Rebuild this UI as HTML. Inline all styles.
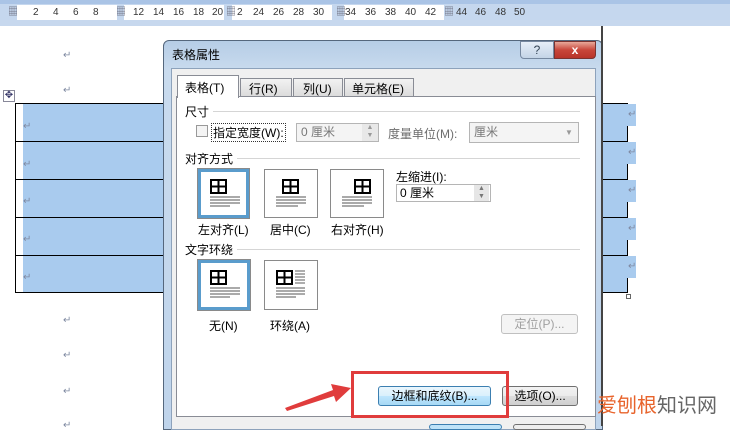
<!DOCTYPE html>
<html><head><meta charset="utf-8"><style>
*{margin:0;padding:0;box-sizing:border-box}
body{width:730px;height:426px;overflow:hidden;background:#fff;position:relative;font-family:"Liberation Sans","Noto Sans CJK SC",sans-serif;font-size:12px;color:#000}
.a{position:absolute}
.ret{position:absolute;color:#7f8aa2;font-size:10px}
.t{position:absolute;white-space:nowrap;font-size:12px}
.box{position:absolute;border:1px solid #8a8a8a;background:#fff}
.sel{border:3px solid #5a9ccc;outline:1px solid #8a8a8a}
.btn{position:absolute;border:1px solid #707070;border-radius:3px;background:linear-gradient(#f2f2f2,#ebebeb 50%,#dddddd 51%,#cfcfcf);text-align:center;font-size:12px;line-height:18px}
</style></head><body>
<!-- ruler -->
<div class="a" style="left:0;top:0;width:730px;height:26px;background:#c5d7ee"></div>
<div class="a" style="left:0;top:0;width:730px;height:4px;background:#aac4e6"></div>
<div class="a" style="left:17px;top:5px;width:100px;height:15px;background:#fff"></div>
<div class="a" style="left:124px;top:5px;width:100px;height:15px;background:#fff"></div>
<div class="a" style="left:232px;top:5px;width:100px;height:15px;background:#fff"></div>
<div class="a" style="left:344px;top:5px;width:100px;height:15px;background:#fff"></div>
<div class="a" style="left:0;top:5px;width:730px;height:15px;font-size:10px;color:#333;line-height:15px">
<span class="a" style="left:8px;color:#667">▦</span>
<span class="a" style="left:33px">2</span><span class="a" style="left:53px">4</span><span class="a" style="left:73px">6</span><span class="a" style="left:93px">8</span>
<span class="a" style="left:116px;color:#667">▦</span>
<span class="a" style="left:133px">12</span><span class="a" style="left:153px">14</span><span class="a" style="left:173px">16</span><span class="a" style="left:193px">18</span><span class="a" style="left:212px">20</span>
<span class="a" style="left:226px;color:#667">▦</span><span class="a" style="left:237px">2</span>
<span class="a" style="left:253px">24</span><span class="a" style="left:273px">26</span><span class="a" style="left:293px">28</span><span class="a" style="left:313px">30</span>
<span class="a" style="left:336px;color:#667">▦</span>
<span class="a" style="left:345px">34</span><span class="a" style="left:365px">36</span><span class="a" style="left:385px">38</span><span class="a" style="left:405px">40</span><span class="a" style="left:425px">42</span>
<span class="a" style="left:444px;color:#667">▦</span><span class="a" style="left:456px">44</span>
<span class="a" style="left:475px">46</span><span class="a" style="left:495px">48</span><span class="a" style="left:514px">50</span>
</div>
<div class="a" style="left:0;top:20px;width:730px;height:6px;background:#c7d8ee"></div>
<!-- returns -->
<span class="ret" style="left:63px;top:50px">↵</span>
<span class="ret" style="left:63px;top:85px">↵</span>
<span class="ret" style="left:63px;top:315px">↵</span>
<span class="ret" style="left:63px;top:350px">↵</span>
<span class="ret" style="left:63px;top:386px">↵</span>
<span class="ret" style="left:63px;top:420px">↵</span>
<div class="a" style="left:3px;top:90px;width:12px;height:12px;border:1px solid #889;font-size:10px;line-height:10px;text-align:center;color:#336">✥</div>
<!-- table -->
<div class="a" style="left:23px;top:103px;width:605px;height:190px;background:#a9cbee"></div>
<div class="a" style="left:15px;top:103px;width:613px;height:190px;border:1px solid #000"></div>
<div class="a" style="left:15px;top:141px;width:613px;height:1px;background:#000"></div>
<div class="a" style="left:15px;top:179px;width:613px;height:1px;background:#000"></div>
<div class="a" style="left:15px;top:217px;width:613px;height:1px;background:#000"></div>
<div class="a" style="left:15px;top:255px;width:613px;height:1px;background:#000"></div>
<span class="ret" style="left:23px;top:121px">↵</span><span class="ret" style="left:23px;top:159px">↵</span><span class="ret" style="left:23px;top:196px">↵</span><span class="ret" style="left:23px;top:234px">↵</span><span class="ret" style="left:23px;top:272px">↵</span>
<div class="a" style="left:627px;top:104px;width:9px;height:22px;background:#a9cbee"></div>
<div class="a" style="left:627px;top:142px;width:9px;height:22px;background:#a9cbee"></div>
<div class="a" style="left:627px;top:180px;width:9px;height:22px;background:#a9cbee"></div>
<div class="a" style="left:627px;top:218px;width:9px;height:22px;background:#a9cbee"></div>
<div class="a" style="left:627px;top:256px;width:9px;height:22px;background:#a9cbee"></div>
<span class="ret" style="left:628px;top:109px">↵</span><span class="ret" style="left:628px;top:147px">↵</span><span class="ret" style="left:628px;top:185px">↵</span><span class="ret" style="left:628px;top:223px">↵</span><span class="ret" style="left:628px;top:261px">↵</span>
<div class="a" style="left:626px;top:294px;width:5px;height:5px;border:1px solid #666"></div>
<!-- dialog -->
<div class="a" style="left:163px;top:40px;width:440px;height:390px;background:linear-gradient(#b6cde6,#c9dbee 30px,#bfd4eb);border:1px solid #55677d;border-radius:6px 6px 0 0"></div>
<div class="t" style="left:172px;top:46px;font-size:12px">表格属性</div>
<div class="a" style="left:520px;top:41px;width:34px;height:18px;border:1px solid #7688a0;border-radius:0 0 0 4px;background:linear-gradient(#e6eef8,#c4d4e6);text-align:center;font-size:12px;color:#345;line-height:16px">?</div>
<div class="a" style="left:554px;top:41px;width:42px;height:18px;border:1px solid #7a3330;border-radius:0 0 4px 0;background:linear-gradient(#e8a89a,#c8463a 50%,#b8342a);text-align:center;color:#fff;font-weight:bold;font-size:12px;line-height:16px">x</div>
<div class="a" style="left:171px;top:68px;width:425px;height:362px;background:#f0f0f0;border:1px solid #8da2bb"></div>
<!-- tabs -->
<div class="a" style="left:176px;top:96px;width:420px;height:321px;background:#fff;border:1px solid #898c95"></div>
<div class="a" style="left:240px;top:78px;width:52px;height:19px;border:1px solid #898c95;background:linear-gradient(#f2f2f2,#dcdcdc)"></div>
<div class="t" style="left:249px;top:80px">行(R)</div>
<div class="a" style="left:293px;top:78px;width:50px;height:19px;border:1px solid #898c95;background:linear-gradient(#f2f2f2,#dcdcdc)"></div>
<div class="t" style="left:303px;top:80px">列(U)</div>
<div class="a" style="left:344px;top:78px;width:70px;height:19px;border:1px solid #898c95;background:linear-gradient(#f2f2f2,#dcdcdc)"></div>
<div class="t" style="left:352px;top:80px">单元格(E)</div>
<div class="a" style="left:177px;top:75px;width:62px;height:23px;border:1px solid #898c95;border-bottom:none;background:#fff"></div>
<div class="t" style="left:185px;top:79px">表格(T)</div>
<!-- size -->
<div class="t" style="left:185px;top:103px">尺寸</div>
<div class="a" style="left:213px;top:111px;width:367px;height:1px;background:#d5d5d5"></div>
<div class="a" style="left:196px;top:125px;width:12px;height:12px;border:1px solid #999;background:#f4f4f4"></div>
<div class="t" style="left:211px;top:123px;border:1px dotted #333;padding:0 1px">指定宽度(W):</div>
<div class="a" style="left:296px;top:123px;width:83px;height:19px;border:1px solid #b5b5b5;background:#f4f4f4;color:#777;padding-left:4px;line-height:17px">0 厘米</div>
<div class="a" style="left:362px;top:124px;width:16px;height:17px;background:#e8e8e8;font-size:7px;color:#999;text-align:center;line-height:8px">▲<br>▼</div>
<div class="t" style="left:388px;top:125px;color:#6d6d6d">度量单位(M):</div>
<div class="a" style="left:469px;top:122px;width:110px;height:21px;border:1px solid #b5b5b5;background:#f4f4f4;color:#777;padding-left:4px;line-height:19px">厘米</div>
<div class="a" style="left:561px;top:124px;width:16px;height:17px;font-size:8px;color:#999;text-align:center;line-height:17px">▼</div>
<!-- align -->
<div class="t" style="left:185px;top:150px">对齐方式</div>
<div class="a" style="left:237px;top:158px;width:343px;height:1px;background:#d5d5d5"></div>
<div class="box sel" style="left:198px;top:169px;width:51px;height:49px"></div>
<div class="box" style="left:264px;top:169px;width:54px;height:49px"></div>
<div class="box" style="left:330px;top:169px;width:54px;height:49px"></div>
<div class="t" style="left:198px;top:221px">左对齐(L)</div>
<div class="t" style="left:270px;top:221px">居中(C)</div>
<div class="t" style="left:331px;top:221px">右对齐(H)</div>
<div class="t" style="left:396px;top:168px">左缩进(I):</div>
<div class="a" style="left:396px;top:184px;width:95px;height:18px;border:1px solid #b5b5b5;background:#fff;padding-left:3px;line-height:16px">0 厘米</div>
<div class="a" style="left:474px;top:185px;width:15px;height:16px;background:#e6e6e6;font-size:7px;color:#777;text-align:center;line-height:8px">▲<br>▼</div>
<!-- wrap -->
<div class="t" style="left:185px;top:241px">文字环绕</div>
<div class="a" style="left:237px;top:249px;width:343px;height:1px;background:#d5d5d5"></div>
<div class="box sel" style="left:198px;top:260px;width:52px;height:50px"></div>
<div class="box" style="left:264px;top:260px;width:54px;height:50px"></div>
<div class="t" style="left:209px;top:317px">无(N)</div>
<div class="t" style="left:270px;top:317px">环绕(A)</div>
<div class="btn" style="left:501px;top:314px;width:77px;height:20px;color:#a0a0a0;border-color:#c0c0c0;background:#f4f4f4">定位(P)...</div>
<div class="btn" style="left:378px;top:386px;width:113px;height:20px;background:linear-gradient(#eaf6fd,#d9f0fc 50%,#bee6fd 51%,#a7d9f5);border-color:#3c7fb1">边框和底纹(B)...</div>
<div class="btn" style="left:502px;top:386px;width:76px;height:20px">选项(O)...</div>
<div class="a" style="left:429px;top:424px;width:73px;height:6px;border:1px solid #3c7fb1;background:#bfe3f8;border-radius:3px"></div>
<div class="a" style="left:513px;top:424px;width:73px;height:6px;border:1px solid #707070;background:#eee;border-radius:3px"></div>
<div class="a" style="left:601px;top:26px;width:2px;height:400px;background:#444"></div>
<svg class="a" style="left:0;top:0" width="730" height="426">
<g fill="none" stroke="#000" stroke-width="2">
<rect x="211" y="180" width="15" height="13"/><line x1="218.5" y1="180" x2="218.5" y2="193"/><line x1="211" y1="186.5" x2="226" y2="186.5"/>
<rect x="283" y="180" width="15" height="13"/><line x1="290.5" y1="180" x2="290.5" y2="193"/><line x1="283" y1="186.5" x2="298" y2="186.5"/>
<rect x="355" y="180" width="15" height="13"/><line x1="362.5" y1="180" x2="362.5" y2="193"/><line x1="355" y1="186.5" x2="370" y2="186.5"/>
<rect x="211" y="271" width="15" height="13"/><line x1="218.5" y1="271" x2="218.5" y2="284"/><line x1="211" y1="277.5" x2="226" y2="277.5"/>
<rect x="277" y="271" width="15" height="13"/><line x1="284.5" y1="271" x2="284.5" y2="284"/><line x1="277" y1="277.5" x2="292" y2="277.5"/>
</g>
<g stroke="#777" stroke-width="1.2">
<line x1="210" y1="197" x2="240" y2="197"/><line x1="210" y1="200" x2="240" y2="200"/><line x1="210" y1="203" x2="240" y2="203"/><line x1="210" y1="206" x2="230" y2="206"/>
<line x1="276" y1="197" x2="306" y2="197"/><line x1="276" y1="200" x2="306" y2="200"/><line x1="276" y1="203" x2="306" y2="203"/><line x1="276" y1="206" x2="298" y2="206"/>
<line x1="342" y1="197" x2="372" y2="197"/><line x1="342" y1="200" x2="372" y2="200"/><line x1="342" y1="203" x2="372" y2="203"/><line x1="342" y1="206" x2="364" y2="206"/>
<line x1="210" y1="288" x2="240" y2="288"/><line x1="210" y1="291" x2="240" y2="291"/><line x1="210" y1="294" x2="240" y2="294"/><line x1="210" y1="297" x2="230" y2="297"/>
<line x1="295" y1="271" x2="305" y2="271"/><line x1="295" y1="274" x2="305" y2="274"/><line x1="295" y1="277" x2="305" y2="277"/><line x1="295" y1="280" x2="305" y2="280"/><line x1="295" y1="283" x2="305" y2="283"/>
<line x1="276" y1="288" x2="305" y2="288"/><line x1="276" y1="291" x2="305" y2="291"/><line x1="276" y1="294" x2="305" y2="294"/><line x1="276" y1="297" x2="296" y2="297"/>
</g>
<rect x="352.5" y="372.5" width="155" height="44" fill="none" stroke="#e03c3c" stroke-width="3"/>
<polygon points="285,408 333,390 331,384 351,388 336,402 334,396 287,411" fill="#e03c3c"/>
</svg>
<!-- watermark -->
<div class="t" style="left:597px;top:394px;font-size:20px;line-height:24px"><span style="color:#e8642c">爱刨根</span><span style="color:#666">知识网</span></div>
</body></html>
